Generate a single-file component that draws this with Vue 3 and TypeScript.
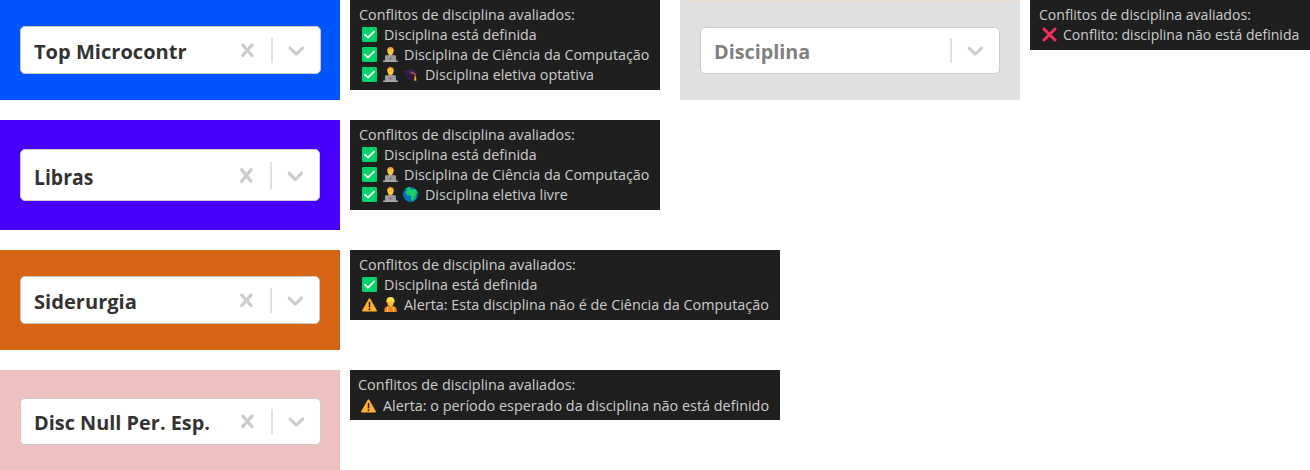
<script setup lang="ts">
import { nextTick, onMounted, ref } from 'vue'

type Icon = 'check' | 'coder' | 'cap' | 'globe' | 'cross' | 'warning' | 'worker'

interface Line {
  icons: Icon[]
  text: string
  width: number
}

interface Example {
  id: string
  value: string
  valueWidth: number
  clearable: boolean
  title: number
  lines: Line[]
}

const rows: Example[][] = [
  [
    {
      id: 'blue', value: 'Top Microcontr', valueWidth: 152.5, clearable: true, title: 216,
      lines: [
        { icons: ['check'], text: 'Disciplina está definida', width: 152.5 },
        { icons: ['check', 'coder'], text: 'Disciplina de Ciência da Computação', width: 245.5 },
        { icons: ['check', 'coder', 'cap'], text: 'Disciplina eletiva optativa', width: 168.7 },
      ],
    },
    {
      id: 'gray', value: 'Disciplina', valueWidth: 96, clearable: false, title: 212,
      lines: [{ icons: ['cross'], text: 'Conflito: disciplina não está definida', width: 236 }],
    },
  ],
  [
    {
      id: 'violet', value: 'Libras', valueWidth: 59.5, clearable: true, title: 216,
      lines: [
        { icons: ['check'], text: 'Disciplina está definida', width: 152.5 },
        { icons: ['check', 'coder'], text: 'Disciplina de Ciência da Computação', width: 245.5 },
        { icons: ['check', 'coder', 'globe'], text: 'Disciplina eletiva livre', width: 142.7 },
      ],
    },
  ],
  [
    {
      id: 'orange', value: 'Siderurgia', valueWidth: 102.5, clearable: true, title: 217,
      lines: [
        { icons: ['check'], text: 'Disciplina está definida', width: 153.5 },
        { icons: ['warning', 'worker'], text: 'Alerta: Esta disciplina não é de Ciência da Computação', width: 364.5 },
      ],
    },
  ],
  [
    {
      id: 'pink', value: 'Disc Null Per. Esp.', valueWidth: 176, clearable: true, title: 217.5,
      lines: [{ icons: ['warning'], text: 'Alerta: o período esperado da disciplina não está definido', width: 386.5 }],
    },
  ],
]

const root = ref<HTMLElement | null>(null)

// Condenses each label horizontally to its nominal width.
function fitLabels() {
  root.value?.querySelectorAll<HTMLElement>('[data-width]').forEach((el) => {
    el.style.transform = `scaleX(${Number(el.dataset.width) / el.offsetWidth})`
  })
}

onMounted(async () => {
  await nextTick()
  fitLabels()
  document.fonts.ready.then(fitLabels)
})
</script>

<template>
  <main ref="root" class="sheet">
    <div v-for="(row, r) in rows" :key="r" class="row">
      <section v-for="ex in row" :key="ex.id" class="example" :class="ex.id">
        <div class="cell">
          <div class="select">
            <div class="value"><span class="fit" :data-width="ex.valueWidth">{{ ex.value }}</span></div>
            <div v-if="ex.clearable" class="indicator clear">
              <svg viewBox="0 0 20 20" preserveAspectRatio="none"><path d="M14.348 14.849c-0.469 0.469-1.229 0.469-1.697 0l-2.651-3.030-2.651 3.029c-0.469 0.469-1.229 0.469-1.697 0-0.469-0.469-0.469-1.229 0-1.697l2.758-3.15-2.759-3.152c-0.469-0.469-0.469-1.228 0-1.697s1.228-0.469 1.697 0l2.652 3.031 2.651-3.031c0.469-0.469 1.228-0.469 1.697 0s0.469 1.229 0 1.697l-2.758 3.152 2.758 3.15c0.469 0.469 0.469 1.229 0 1.698z" /></svg>
            </div>
            <span class="separator"></span>
            <div class="indicator">
              <svg viewBox="0 0 20 20" preserveAspectRatio="none"><path d="M4.516 7.548c0.436-0.446 1.043-0.481 1.576 0l3.908 3.747 3.908-3.747c0.533-0.481 1.141-0.446 1.574 0 0.436 0.445 0.408 1.197 0 1.615-0.406 0.418-4.695 4.502-4.695 4.502-0.217 0.223-0.502 0.335-0.787 0.335s-0.57-0.112-0.789-0.335c0 0-4.287-4.084-4.695-4.502s-0.436-1.17 0-1.615z" /></svg>
            </div>
          </div>
        </div>
        <div class="report">
          <div class="title"><span class="fit" :data-width="ex.title">Conflitos de disciplina avaliados:</span></div>
          <div v-for="(line, l) in ex.lines" :key="l" class="line">
            <svg v-for="icon in line.icons" :key="icon" class="emoji" viewBox="0 0 15 15">
              <template v-if="icon === 'check'">
                <rect width="15" height="15" rx="1.2" fill="#00d26a" />
                <path d="M3 7.7 6 10.7 12 4.6" fill="none" stroke="#fff" stroke-width="1.9" stroke-linecap="round" stroke-linejoin="round" />
              </template>
              <template v-else-if="icon === 'coder'">
                <path d="M2 14V11.2Q2 8.3 5 8.2h5q3 .1 3 3V14z" fill="#8b8790" />
                <path d="M5.8 6h3.4v2.8L7.5 10 5.8 8.8z" fill="#e59620" />
                <path d="M4.2 4.6Q3.9.2 7.5.1q3.6.1 3.3 4.5z" fill="#f59b23" />
                <ellipse cx="7.5" cy="4.6" rx="2.9" ry="3.3" fill="#ffc83d" />
                <path d="M4.5 3.5Q5.2 1.3 7.5 1.7q2.3-.4 3 1.8Q10.3.4 7.5.4 4.7.4 4.5 3.5z" fill="#f59b23" />
                <path d="M5.9 4.1h.8m1.6 0h.8" stroke="#7b5130" stroke-width=".6" />
                <rect x="2.2" y="8.3" width="10.6" height="6" rx=".7" fill="#9b9b9b" />
                <rect x="0" y="13.6" width="15" height="1.4" rx=".4" fill="#aaa" />
                <circle cx="7.5" cy="11.4" r=".9" fill="#636363" />
              </template>
              <template v-else-if="icon === 'cap'">
                <path d="M3 6.5v4.2q1.5 2.6 6.8 2.5V8z" fill="#321b41" />
                <path d="M.3 4.8 7.5 2l7.2 3.600-4.5 3.800z" fill="#402051" />
                <path d="m.3 4.8 9.9 4.1 4.5-3.3-4.500 4.100z" fill="#20122a" />
                <path d="m7.6 5 4.6 2v3.2" fill="none" stroke="#d8752f" stroke-width="1" />
                <path d="M11.5 9.6h1.5l.4 4.2h-2.3z" fill="#f5a23b" />
              </template>
              <template v-else-if="icon === 'globe'">
                <circle cx="7.5" cy="7.5" r="7.5" fill="#0074ba" />
                <path d="M2.2 2.2Q4 .3 6.5.1l1.3 1-1.1.8 2.6.5 2.9-.2q2.400 2.100 2.700 4.400l-1.200-.3-.9-1.100-.3 1.200 1.200 1.300-2 2.100-.3 2.300-2 2.100-1.200-1.800-.2-2.900-1.100-1.200-2.400-.1-1.700-2.100.4-2 2.500-1.300-.8-.7-1.100.8z" fill="#18ce68" />
                <path d="m12.3 10.2.8-.7-.2 1.8-1 .8z" fill="#18ce68" />
              </template>
              <template v-else-if="icon === 'cross'">
                <path d="M2 2 13 13M13 2 2 13" stroke="#f92f60" stroke-width="2.9" stroke-linecap="round" />
              </template>
              <template v-else-if="icon === 'warning'">
                <path d="M7.5 2.3 14 13.7H1z" fill="#ffb02e" stroke="#ffb02e" stroke-width="1.8" stroke-linejoin="round" />
                <path d="M7.5 5.5v4.3" stroke="#321b13" stroke-width="1.5" stroke-linecap="round" />
                <circle cx="7.5" cy="12.3" r=".95" fill="#321b13" />
              </template>
              <template v-else>
                <path d="M1.3 15v-2q0-3.300 3.200-3.500h6q3.200.2 3.200 3.500v2z" fill="#f57c32" />
                <path d="M3.8 9.5h1.4V15H3.800zm6 0h1.400V15H9.800z" fill="#ffd13d" />
                <path d="M5.7 7.5h3.6v2.3l-1.8 1.3-1.8-1.3z" fill="#e7981c" />
                <ellipse cx="7.5" cy="5.8" rx="3.2" ry="3.5" fill="#ffb92e" />
                <path d="M3.4 4.9Q3.3.1 7.5 0q4.2.1 4.1 4.9z" fill="#ffe04b" />
                <path d="M3.1 4.5h8.8v.8H3.1z" fill="#f8bc2b" />
              </template>
            </svg>
            <span class="fit label" :data-width="line.width">{{ line.text }}</span>
          </div>
        </div>
      </section>
    </div>
  </main>
</template>

<style>
html,
body {
  background: #fff;
}
</style>

<style scoped>
.sheet {
  width: 1310px;
  height: 470px;
  display: flex;
  flex-direction: column;
  gap: 20px;
  overflow: hidden;
  font-family: 'Open Sans', 'Noto Sans', sans-serif;
}
.row {
  display: flex;
  gap: 20px;
}
.example {
  display: flex;
  align-items: flex-start;
  gap: 10px;
}
.cell {
  box-sizing: border-box;
  width: 340px;
  height: 100px;
  padding: 26px 19px 26px 20px;
  background: #0055ff;
}
.select {
  box-sizing: border-box;
  height: 100%;
  display: flex;
  align-items: center;
  background: #fff;
  border: 1px solid #ccc;
  border-radius: 5px;
}
.value {
  flex: 1;
  padding-left: 13px;
  padding-top: 3px;
  font-size: 20px;
  line-height: 28px;
  font-weight: 700;
  color: #333;
  white-space: nowrap;
}
.indicator {
  width: 47.5px;
  display: flex;
  justify-content: center;
}
.clear {
  width: 46.5px;
}
.indicator svg {
  width: 26.7px;
  height: 26.7px;
  fill: #ccc;
}
.separator {
  width: 2px;
  height: 25px;
  background: #e0e0e0;
}
.fit {
  display: inline-block;
  transform-origin: 0 50%;
  white-space: nowrap;
}
.report {
  box-sizing: border-box;
  width: 310px;
  padding: 4px 0 6px;
  background: #1f1f1f;
  color: #ccc;
  font-size: 15px;
  line-height: 20px;
}
.title {
  height: 20px;
  padding-left: 9px;
}
.line {
  height: 20px;
  display: flex;
  align-items: center;
  padding-left: 12px;
}
.emoji {
  flex: none;
  width: 15px;
  height: 15px;
  margin-right: 5.5px;
}
.label {
  margin-left: 1.2px;
}
.gray .cell {
  background: #e0e0e0;
  border-top: 1px solid #ebdccb;
  padding: 26px 20px;
}
.gray .value {
  color: #808080;
}
.gray .report {
  width: 280px;
}
.gray .label {
  margin-left: 0.5px;
}
.violet .cell {
  height: 110px;
  background: #4800ff;
  padding: 29px 20px;
}
.violet .value {
  padding-top: 5px;
}
.violet .value .fit {
  font-size: 21.5px;
}
.violet .indicator svg {
  height: 29px;
}
.violet .separator {
  height: 27px;
}
.orange .cell {
  background: #d66616;
  padding-right: 20px;
}
.orange .value {
  padding-top: 4px;
}
.orange .report,
.pink .report {
  width: 430px;
}
.pink .cell {
  background: #eec0c0;
  padding: 28px 19px 25px 20px;
}
.pink .value {
  padding-top: 2px;
}
.pink .report {
  padding-bottom: 5px;
}
.pink .title {
  padding-left: 8px;
}
.pink .line {
  padding-left: 11px;
  padding-top: 1px;
}
.pink .label {
  margin-left: 1.8px;
}
</style>
